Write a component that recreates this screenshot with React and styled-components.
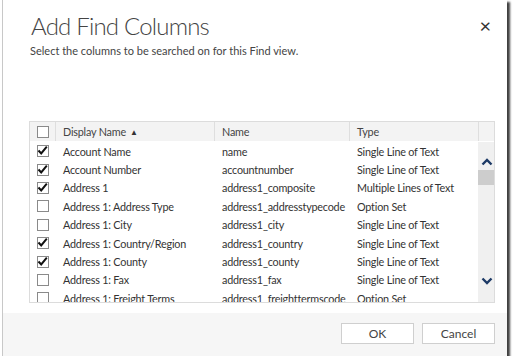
import React from 'react';
import styled, { createGlobalStyle } from 'styled-components';

const GlobalStyle = createGlobalStyle`
    body {
        margin: 0;
        background: #fff;
        font-family: Lato, "Open Sans", sans-serif;
    }
`;

const rows = [
    { label: 'Account Name', name: 'name', type: 'Single Line of Text', checked: true },
    { label: 'Account Number', name: 'accountnumber', type: 'Single Line of Text', checked: true },
    { label: 'Address 1', name: 'address1_composite', type: 'Multiple Lines of Text', checked: true },
    { label: 'Address 1: Address Type', name: 'address1_addresstypecode', type: 'Option Set', checked: false },
    { label: 'Address 1: City', name: 'address1_city', type: 'Single Line of Text', checked: false },
    { label: 'Address 1: Country/Region', name: 'address1_country', type: 'Single Line of Text', checked: true },
    { label: 'Address 1: County', name: 'address1_county', type: 'Single Line of Text', checked: true },
    { label: 'Address 1: Fax', name: 'address1_fax', type: 'Single Line of Text', checked: false },
    { label: 'Address 1: Freight Terms', name: 'address1_freighttermscode', type: 'Option Set', checked: false },
];

const CheckBox = ({ checked }) => (
    <Box>
        {checked && (
            <svg width="11" height="11" viewBox="0 0 11 11">
                <path d="M1.5 5.5 L4.2 8.5 L9.8 1.6" fill="none" stroke="#111" strokeWidth="2" />
            </svg>
        )}
    </Box>
);

const App = () => {
    return (
        <>
            <GlobalStyle />
            <Dialog>
                <Header>
                    <Title>Add Find Columns</Title>
                    <Subtitle>Select the columns to be searched on for this Find view.</Subtitle>
                    <Close>×</Close>
                </Header>

                <Table>
                    <HeadRow>
                        <Cell><CheckBox /></Cell>
                        <HeadCell>Display Name <Arrow>▲</Arrow></HeadCell>
                        <HeadCell>Name</HeadCell>
                        <HeadCell>Type</HeadCell>
                        <HeadCell />
                    </HeadRow>
                    <BodyWrap>
                        <RowList>
                            {rows.map((r) => (
                                <Row key={r.name}>
                                    <Cell><CheckBox checked={r.checked} /></Cell>
                                    <Cell>{r.label}</Cell>
                                    <Cell>{r.name}</Cell>
                                    <Cell>{r.type}</Cell>
                                </Row>
                            ))}
                        </RowList>
                        <ScrollBar>
                            <svg width="12" height="8" viewBox="0 0 12 8">
                                <path d="M1.5 6.5 L6 2 L10.5 6.5" fill="none" stroke="#1d3a66" strokeWidth="2.4" />
                            </svg>
                            <Thumb />
                            <Spacer />
                            <svg width="12" height="8" viewBox="0 0 12 8">
                                <path d="M1.5 1.5 L6 6 L10.5 1.5" fill="none" stroke="#1d3a66" strokeWidth="2.4" />
                            </svg>
                        </ScrollBar>
                    </BodyWrap>
                </Table>

                <Footer>
                    <Button>OK</Button>
                    <Button>Cancel</Button>
                </Footer>
            </Dialog>
        </>
    );
};

const Dialog = styled.div`
    position: relative;
    display: flex;
    flex-direction: column;
    width: 504px;
    height: 356px;
    margin-left: 2px;
    background: #fff;
    border-left: 1px solid #c8c8c8;
    box-shadow: 3px 2px 2px rgba(0, 0, 0, 0.75);
`;

const Header = styled.div`
    position: relative;
    padding: 11px 0 0 28px;
    height: 121px;
    box-sizing: border-box;
`;

const Title = styled.h1`
    margin: 0;
    font-size: 24px;
    font-weight: 300;
    line-height: 30px;
    letter-spacing: -0.8px;
    color: #444;
`;

const Subtitle = styled.p`
    margin: 3px 0 0 -1px;
    font-size: 11px;
    color: #444;
`;

const Close = styled.span`
    position: absolute;
    top: 15px;
    right: 16px;
    font-size: 20px;
    color: #333;
    line-height: 20px;
`;

const Table = styled.div`
    margin-left: 26px;
    width: 466px;
    height: 182px;
    box-sizing: border-box;
    border: 1px solid #dcdcdc;
    display: flex;
    flex-direction: column;
    font-size: 10.8px;
    letter-spacing: -0.2px;
    color: #333;
    overflow: hidden;
`;

const HeadRow = styled.div`
    display: grid;
    grid-template-columns: 25px 159px 135px 129px 1fr;
    height: 19px;
    background: #f3f3f3;
    flex-shrink: 0;
`;

const Cell = styled.div`
    display: flex;
    align-items: center;
    padding-left: 7px;
    white-space: nowrap;
    overflow: hidden;
`;

const HeadCell = styled(Cell)`
    border-left: 1px solid #dedede;
    color: #444;
`;

const Arrow = styled.span`
    font-size: 8px;
    margin-left: 4px;
    color: #333;
`;

const BodyWrap = styled.div`
    flex: 1;
    display: flex;
    overflow: hidden;
    padding-top: 1px;
`;

const RowList = styled.div`
    flex: 1;
    display: flex;
    flex-direction: column;
`;

const Row = styled.div`
    display: grid;
    grid-template-columns: 25px 159px 135px 129px;
    height: 18.4px;
    flex-shrink: 0;

    & > div:nth-child(n + 2) {
        padding-left: 8px;
    }
`;

const Box = styled.div`
    width: 10px;
    height: 10px;
    border: 1px solid #8a8a8a;
    background: #fff;
    position: relative;

    svg {
        position: absolute;
        left: -1px;
        top: -1px;
    }
`;

const ScrollBar = styled.div`
    width: 17px;
    background: #f0f0f0;
    display: flex;
    flex-direction: column;
    align-items: center;
    padding-top: 16px;
    padding-bottom: 17px;
    box-sizing: border-box;
`;

const Thumb = styled.div`
    width: 17px;
    height: 15px;
    margin-top: 4px;
    background: #cdcdcd;
`;

const Spacer = styled.div`
    flex: 1;
`;

const Footer = styled.div`
    margin-top: auto;
    height: 33px;
    background: #f6f6f6;
    display: flex;
    justify-content: flex-end;
    align-items: flex-start;
    gap: 8px;
    padding: 10px 12px 0 0;
`;

const Button = styled.button`
    width: 73px;
    height: 21px;
    border: 1px solid #cfcfcf;
    background: #fff;
    font-family: inherit;
    font-size: 12px;
    color: #444;
    padding: 0;
`;

export default App;
